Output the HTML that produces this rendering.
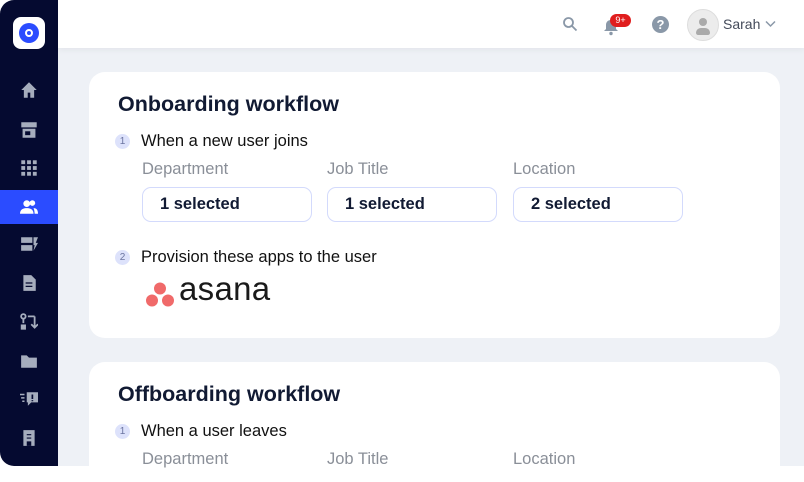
<!DOCTYPE html>
<html><head><meta charset="utf-8"><style>
*{margin:0;padding:0;box-sizing:border-box}
body{width:804px;height:466px;overflow:hidden;background:#fff;font-family:"Liberation Sans",sans-serif;position:relative}
.side{position:absolute;left:0;top:0;width:58px;height:466px;background:#050a30;border-radius:14px 0 0 14px}
.logo{position:absolute;left:13px;top:17px;width:32px;height:32px;background:#fff;border-radius:8px}
.logo:before{content:"";position:absolute;left:6px;top:6px;width:20px;height:20px;border-radius:50%;background:#2b4cff}
.logo:after{content:"";position:absolute;left:12px;top:12px;width:4px;height:4px;border-radius:50%;border:2px solid #fff;background:#2b4cff}
.ic{position:absolute;left:20px;width:18px;height:18px}
.act{position:absolute;left:0;top:190px;width:58px;height:34px;background:#2b4cff}
.main{position:absolute;left:58px;top:0;right:0;bottom:0;background:#eef1f6}
.top{position:absolute;left:0;top:0;right:0;height:48px;background:#fff;box-shadow:0 2px 6px rgba(0,0,0,.05)}
.card{position:absolute;left:89px;width:691px;background:#fff;border-radius:16px}
h2{position:absolute;left:29px;font-size:21.5px;font-weight:bold;color:#111a33}
.step{position:absolute;left:26px;font-size:16.5px;color:#111;display:flex;align-items:center}
.num{width:15px;height:15px;border-radius:50%;background:#dde2fb;color:#6b74a0;font-size:10px;text-align:center;line-height:15px;margin-right:11px}
.lbl{position:absolute;font-size:16.5px;color:#8a8f98}
.sel{position:absolute;width:170px;height:35px;border:1.5px solid #d3dafc;border-radius:9px;font-size:16.5px;font-weight:bold;color:#111a33;padding-left:17px;line-height:32px}
</style></head><body>
<div class="side">
<div class="logo"></div>
<div class="act"></div>
<svg class="ic" style="top:81px" viewBox="2 2 14 14"><path d="M3 9L9 3l6 6h-2v6h-3v-4H8v4H5V9z" fill="#a6adbd"/></svg>
<svg class="ic" style="top:121px" viewBox="2 2 14 14"><path d="M3 3h12v4H3z M4 8h10v7H4z" fill="#a6adbd"/><rect x="6" y="10" width="4" height="3" fill="#050a30"/></svg>
<svg class="ic" style="top:159px" viewBox="2 2 14 14" fill="#a6adbd"><rect x="3" y="3" width="3" height="3"/><rect x="7.5" y="3" width="3" height="3"/><rect x="12" y="3" width="3" height="3"/><rect x="3" y="7.5" width="3" height="3"/><rect x="7.5" y="7.5" width="3" height="3"/><rect x="12" y="7.5" width="3" height="3"/><rect x="3" y="12" width="3" height="3"/><rect x="7.5" y="12" width="3" height="3"/><rect x="12" y="12" width="3" height="3"/></svg>
<svg class="ic" style="top:198px" viewBox="1 1 16 16" fill="#fff"><circle cx="7" cy="6" r="3"/><path d="M1 15c0-4 3-5 6-5s6 1 6 5z"/><circle cx="12" cy="5.5" r="2.5"/><path d="M13 10c3 0 4 2 4 5h-3c0-2-0.5-4-1-5z"/></svg>
<svg class="ic" style="top:235px" viewBox="1 1 16 16" fill="#a6adbd"><rect x="2" y="3" width="10" height="5"/><rect x="2" y="10" width="10" height="5"/><path d="M13 3h4l-2 5h2l-4 7 1-5h-1z"/></svg>
<svg class="ic" style="top:274px" viewBox="1 1 16 16"><path d="M4 2h7l4 4v10H4z" fill="#a6adbd"/><path d="M6 9h6M6 12h6" stroke="#050a30" stroke-width="1.2"/></svg>
<svg class="ic" style="top:313px" viewBox="1 1 16 16" fill="none" stroke="#a6adbd" stroke-width="1.6"><circle cx="4" cy="4" r="2"/><path d="M4 6v4M8 4h6M14 4v9M11 11l3 3 3-3"/><rect x="2.5" y="12" width="3" height="3" fill="#a6adbd"/></svg>
<svg class="ic" style="top:352px" viewBox="1 1 16 16"><path d="M2 4h5l2 2h7v9H2z" fill="#a6adbd"/></svg>
<svg class="ic" style="top:390px" viewBox="1 1 16 16"><path d="M7 3h10v9h-6l-3 3v-3H7z" fill="#a6adbd"/><path d="M1 5h4M2 8h3M3 11h2" stroke="#a6adbd" stroke-width="1.3"/><path d="M12 5v4M12 10v1" stroke="#050a30" stroke-width="1.5"/></svg>
<svg class="ic" style="top:429px" viewBox="1 1 16 16"><path d="M4 2h10v14H4z" fill="#a6adbd"/><path d="M7 6h4M7 9h4" stroke="#050a30"/><rect x="7" y="12" width="4" height="4" fill="#050a30"/></svg>
</div>
<div class="main">
<div class="top">
<svg style="position:absolute;left:504px;top:16px" width="16" height="16" viewBox="0 0 16 16" fill="none" stroke="#8a98a8" stroke-width="1.8"><circle cx="6.5" cy="6.5" r="4.5"/><path d="M10 10l4.5 4.5"/></svg>
<svg style="position:absolute;left:545px;top:18px" width="16" height="18" viewBox="0 0 16 18" fill="#8a98a8"><path d="M8 2c3 0 5 2 5 5v4l2 2H1l2-2V7c0-3 2-5 5-5z"/><circle cx="8" cy="15.5" r="1.7"/></svg>
<div style="position:absolute;left:552px;top:14px;width:21px;height:13px;background:#e01e1e;border-radius:7px;color:#fff;font-size:9px;text-align:center;line-height:13px">9+</div>
<div style="position:absolute;left:594px;top:16px;width:17px;height:17px;border-radius:50%;background:#8a98a8;color:#fff;font-size:13px;font-weight:bold;text-align:center;line-height:17px">?</div>
<div style="position:absolute;left:629px;top:9px;width:32px;height:32px;border-radius:50%;background:#ececec;border:1px solid #ddd;overflow:hidden"><div style="position:absolute;left:11px;top:8px;width:8px;height:8px;border-radius:50%;background:#aaa"></div><div style="position:absolute;left:8px;top:18px;width:14px;height:7px;border-radius:7px 7px 3px 3px;background:#aaa"></div></div>
<div style="position:absolute;left:665px;top:16px;font-size:14px;color:#444b5a">Sarah</div>
<svg style="position:absolute;left:707px;top:20px" width="11" height="8" viewBox="0 0 11 8" fill="none" stroke="#8a98a8" stroke-width="1.5"><path d="M1 1.5l4.5 4.5 4.5-4.5"/></svg>
</div>
</div>
<div class="card" style="top:72px;height:266px">
<h2 style="top:20px">Onboarding workflow</h2>
<div class="step" style="top:60px"><span class="num">1</span>When a new user joins</div>
<div class="lbl" style="left:53px;top:88px">Department</div>
<div class="lbl" style="left:238px;top:88px">Job Title</div>
<div class="lbl" style="left:424px;top:88px">Location</div>
<div class="sel" style="left:53px;top:115px">1 selected</div>
<div class="sel" style="left:238px;top:115px">1 selected</div>
<div class="sel" style="left:424px;top:115px">2 selected</div>
<div class="step" style="top:176px"><span class="num">2</span>Provision these apps to the user</div>
<svg style="position:absolute;left:56px;top:210px" width="30" height="26" viewBox="0 0 30 26" fill="#f06a6a"><circle cx="15" cy="6.5" r="6"/><circle cx="7" cy="18.5" r="6"/><circle cx="23" cy="18.5" r="6"/></svg>
<div style="position:absolute;left:90px;top:198px;font-size:33px;color:#1a1a1a;letter-spacing:0.3px">asana</div>
</div>
<div class="card" style="top:362px;height:120px">
<h2 style="top:20px">Offboarding workflow</h2>
<div class="step" style="top:60px"><span class="num">1</span>When a user leaves</div>
<div class="lbl" style="left:53px;top:88px">Department</div>
<div class="lbl" style="left:238px;top:88px">Job Title</div>
<div class="lbl" style="left:424px;top:88px">Location</div>
</div>
</body></html>
